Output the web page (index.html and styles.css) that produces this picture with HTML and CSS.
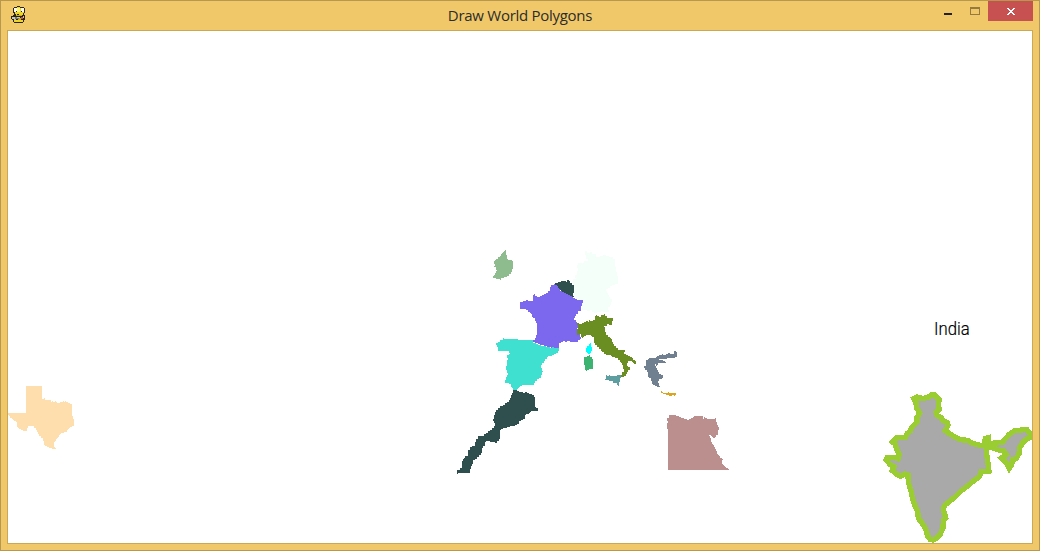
FILE: index.html
```html
<!DOCTYPE html>
<html lang="en">
<head>
<meta charset="utf-8">
<title>Draw World Polygons</title>
<link rel="stylesheet" href="styles.css">
</head>
<body>
<div class="window">
  <header class="titlebar">
    <svg class="app-icon" viewBox="30 18 48 54" shape-rendering="crispEdges">
      <path fill="#2b250c" d="M42 21h9v-3h9v3h12v3h3v15h-3v6h3v15h-3v6h-3v3H42v-3h-3v-6h-3v-3h-3V48h6v-3h3v-6h-3V24h3z"/>
      <path fill="#ecd62b" d="M45 24h6v-3h9v3h12v15h-3v6H48v-3h-3zM42 60h27v6H42z"/>
      <path fill="#fff568" d="M51 24h9v12h-9z"/>
      <path fill="#c9b01c" d="M48 45h18v3H48zM54 54h9v6h-9z"/>
      <path fill="#fafaf4" d="M42 24h9v12h-9zM63 24h9v12h-9z"/>
      <path fill="#222" d="M48 33h3v3h-3zM63 33h3v3h-3zM51 42h6v3h-6z"/>
      <path fill="#c4c4c0" d="M36 51h9v6h-9zM42 57h6v3h-6zM51 51h9v3h-9zM69 48h3v6h-3z"/>
      <path fill="#777" d="M45 51h6v6h-6zM51 54h6v3h-6z"/>
      <path fill="#d64555" d="M63 51h6v6h-6z"/>
    </svg>
    <h1 class="title">Draw World Polygons</h1>
    <div class="controls">
      <span class="minimize"></span>
      <span class="maximize"></span>
      <span class="close"><svg viewBox="0 0 8 7" width="8" height="7" shape-rendering="crispEdges"><path fill="#fff" d="M0 0h2v1h1v1h2v-1h1v-1h2v1h-1v1h-1v1h-1v1h1v1h1v1h1v1h-2v-1h-1v-1h-2v1h-1v1h-2v-1h1v-1h1v-1h1v-1h-1v-1h-1v-1h-1z"/></svg></span>
    </div>
  </header>
  <main class="canvas">
    <svg class="map" viewBox="8 31 1024 512" width="1024" height="512" shape-rendering="crispEdges">
      <!-- Texas -->
      <g transform="translate(0 380) scale(.33333)">
        <path fill="#ffdead" d="M78 18H126V57H132V54H135V60H153V66H156V63H159V66H165V63H168V66H171V69H180V66H189V63H192V66H195V63H198V66H204V69H210V72H216V108H219V117H222V138H216V141H210V144H207V147H204V150H201V156H192V159H183V162H180V165H177V171H174V174H171V177H168V183H165V186H162V201H165V204H168V207H156V204H147V201H141V198H135V195H132V183H129V174H123V168H117V162H114V156H111V150H108V144H102V138H84V144H81V153H69V150H63V147H57V144H54V141H51V126H48V123H42V120H39V117H36V114H30V108H27V105H24V99H78Z"/>
      </g>
      <!-- Germany, Belgium, France, Ireland -->
      <g transform="translate(485 245) scale(.33333)">
        <path fill="#8fbc8f" d="M60 15H63V30H66V42H69V45H81V48H84V72H81V81H78V87H72V93H66V96H57V99H48V104H45V101H33V99H24V93H27V90H30V84H33V78H36V75H33V66H27V63H30V57H27V48H30V45H33V42H39V36H45V33H48V27H51V24H54V21H57V18H60Z"/>
        <path fill="#f5fffa" d="M300 18H306V24H315V21H321V27H333V36H345V33H354V30H363V33H372V36H384V42H390V66H393V81H396V93H399V117H390V120H381V123H375V129H369V132H363V138H366V144H369V150H372V156H375V162H381V171H378V180H375V186H369V195H372V201H354V198H348V201H336V204H327V201H321V195H315V198H306V195H291V186H290V165H279V162H273V156H267V129H264V102H273V99H270V90H276V78H279V69H276V60H279V54H297V48H309V42H303V30H300Z"/>
        <path fill="#2f4f4f" d="M210 117V114H219V111H228V108H243V111H246V105H252V108H255V114H261V120H267V144H264V153H267V156H255V153H246V147L231 141L219 129Z"/>
        <path fill="#7b68ee" d="M201 120H207V117H210V120H216V123H219V129H222V132H225V138H231V141H237V144H243V147H249V150H255V153H261V156H264V159H270V162H276V165H294V174H291V183H288V198H279V207H273V213H270V219H267V225H273V231H276V240H279V249H276V261H282V267H285V276H288V282H285V285H279V291H255V288H246V291H240V288H234V291H228V294H222V309H207V306H201V309H198V306H186V303H177V300H165V297H159V294H150V291H144V285H150V279H153V270H156V234H153V228H150V219H144V216H141V207H138V204H135V201H129V195H123V192H105V171H114V168H123V165H129V168H144V150H147V147H150V153H156V156H165V153H171V150H177V147H183V144H189V138H195V126H198V120Z"/>
      </g>
      <!-- Spain -->
      <g transform="translate(490 330) scale(.33333)">
        <path fill="#40e0d0" d="M36 30H39V24H42V27H84V30H129V39H138V42H144V45H153V48H168V51H180V54H186V51H192V54H207V63H204V69H198V72H192V75H186V78H174V81H171V87H165V93H162V99H156V105H153V114H156V123H159V126H156V135H153V144H147V147H141V153H135V159H132V165H96V168H90V171H87V174H84V177H81V180H69V174H66V171H63V162H57V159H45V150H48V141H51V135H54V129H51V120H48V108H51V90H54V84H51V75H57V72H60V69H57V63H24V51H21V45H18V39H24V36H30V30Z"/>
      </g>
      <!-- Italy and its islands, Greece -->
      <g transform="translate(570 310) scale(.33333)">
        <path fill="#6b8e23" d="M21 39H27V42H36V39H42V36H48V33H54V36H57V30H60V33H69V30H75V18H78V15H81V18H87V21H93V15H102V12H105V18H111V24H129V33H126V45H117V42H111V48H102V51H105V66H108V75H114V81H120V84H123V87H126V96H129V102H132V108H138V114H144V120H165V126H162V132H168V135H174V138H180V141H186V144H189V150H195V153H198V162H192V159H189V156H186V153H174V159H171V168H174V171H180V180H174V186H171V192H168V198H162V201H153V195H156V186H162V177H159V165H156V159H153V156H150V150H144V144H135V141H126V138H123V135H108V132H102V126H96V123H93V117H87V111H81V105H75V99H72V81H66V78H63V75H48V78H42V81H39V84H36V81H33V72H27V75H21V57H24V45H21Z"/>
        <path fill="#0ff" d="M60 99H63V111H66V123H63V129H60V132H54V129H51V126H48V114H51V108H57V102H60Z"/>
        <path fill="#3cb371" d="M42 141H51V138H57V135H60V141H66V147H69V177H57V180H51V183H48V180H45V165H42Z"/>
        <path fill="#5f9ea0" d="M108 195H111V198H117V195H120V198H141V195H153V204H150V216H147V228H144V225H141V219H129V213H117V210H105V207H108Z"/>
        <path fill="#708090" d="M312 123H318V126H321V141H315V144H291V147H267V150H279V153H285V156H288V159H264V165H261V168H258V162H255V168H258V174H261V180H264V186H267V192H273V195H279V204H276V207H267V213H264V219H267V228H270V231H261V228H255V225H249V222H246V213H243V204H237V201H234V186H231V180H225V174H222V168H228V150H234V147H237V144H258V141H261V138H267V135H276V132H279V135H288V132H294V129H300V132H312Z"/>
        <path fill="#daa520" d="M273 243H276V246H279V249H294V246H297V249H318V255H315V258H312V255H306V258H297V255H288V252H279V249H273Z"/>
      </g>
      <!-- Morocco -->
      <g transform="translate(450 385) scale(.33333)">
        <path fill="#2f4f4f" d="M189 15H201V18H207V21H219V24H225V21H231V24H237V27H246V30H252V36H255V66H258V69H264V78H243V81H240V84H237V87H228V90H225V102H219V105H213V108H207V117H201V120H195V123H180V126H171V129H159V132H153V135H150V162H147V168H141V174H135V171H120V168H108V171H105V183H99V189H96V204H93V210H87V216H81V222H75V225H69V237H66V243H63V252H60V264H24V267H21V255H30V249H36V228H39V222H42V219H45V213H54V195H60V186H66V183H75V171H78V162H84V153H102V147H108V144H114V138H120V135H126V129H132V123H135V114H132V108H129V102H132V90H135V81H138V75H144V69H150V63H159V60H165V54H171V51H177V45H180V39H183V30H186V24H189Z"/>
      </g>
      <!-- Egypt -->
      <g transform="translate(660 405) scale(.33333)">
        <path fill="#bc8f8f" d="M27 30H48V33H57V36H63V39H72V42H81V45H87V42H93V39H99V36H102V33H129V42H132V36H135V39H141V42H165V39H168V51H171V60H174V66H177V75H174V90H168V96H165V99H159V96H156V93H153V90H147V93H150V99H153V111H156V117H159V120H162V126H165V132H168V138H171V147H174V150H177V153H180V159H186V162H189V165H186V177H189V180H192V183H195V186H198V189H204V192H207V195H24V72H21V54H24V48H21V39H27Z"/>
      </g>
      <!-- India -->
      <g transform="translate(880 385) scale(.33333)" fill="#a9a9a9" stroke="#9acd32" stroke-width="16" stroke-linejoin="miter" stroke-miterlimit="2">
        <path d="M101 41L111 36L118 39L130 40L145 37L153 30L164 29L170 37L178 45L175 58L178 73L168 82L172 92L184 98L188 106L201 112L204 120L200 130L196 137L208 146L225 156L240 164L262 166L276 174L296 180L312 183L316 160L325 158L323 183L319 200L321 215L324 235L327 258L304 260L297 276L278 290L262 304L244 317L224 337L209 349L195 360L190 372L197 398L190 405L189 430L180 449L169 460L160 465L151 464L142 452L137 432L125 412L115 400L113 380L102 355L98 340L92 315L85 292L84 270L74 267L62 274L51 268L37 257L42 245L31 239L18 225L22 217L43 218L54 221L58 208L50 194L46 178L38 171L52 157L75 158L81 146L91 138L96 126L112 110L110 98L119 84L110 69L108 55Z"/>
        <path d="M323 170L331 180L342 174L366 173L377 160L389 147L405 137L424 135L440 133L449 145L453 157L438 164L428 174L420 186L417 206L409 221L398 224L395 240L388 250L381 236L370 225L364 219L379 209L372 198L352 194L337 188Z"/>
      </g>
    </svg>
    <div class="country-label">India</div>
  </main>
</div>
</body>
</html>
```
FILE: styles.css
```css
* { box-sizing: border-box; }
body { margin: 0; background: #f0c869; }
.window {
  width: 1040px;
  height: 551px;
  border: 1px solid #b7984f;
  background: #f0c869;
  padding: 0 6px 6px;
  display: flex;
  flex-direction: column;
}
.titlebar {
  height: 29px;
  flex: none;
  display: grid;
  grid-template-columns: 120px 1fr 120px;
  align-items: start;
}
.app-icon { width: 16px; height: 18px; margin: 5px 0 0 3px; }
.title {
  margin: 4px 0 0;
  font: 400 15px/20px "Open Sans", "Noto Sans", sans-serif;
  letter-spacing: -0.28px;
  color: #2c2c2c;
  text-align: center;
}
.controls { display: flex; justify-content: flex-end; }
.minimize { width: 8px; height: 2px; margin: 12px 18px 0 0; background: #222; }
.maximize { width: 10px; height: 8px; margin: 6px 8px 0 0; border: 1px solid #96793f; border-top-width: 2px; }
.close {
  width: 45px;
  height: 20px;
  background: #c75050;
  display: flex;
  align-items: center;
  justify-content: center;
  padding-left: 1px;
  padding-top: 1px;
}
.canvas {
  position: relative;
  width: 1026px;
  height: 514px;
  border: 1px solid #c9a858;
  background: #fff;
  overflow: hidden;
}
.map { display: block; }
.country-label {
  position: absolute;
  left: 926px;
  top: 288px;
  font: 300 19px/20px Roboto, "Liberation Sans", sans-serif;
  transform: scaleX(.88);
  transform-origin: 0 0;
  -webkit-text-stroke: 0.2px #000;
  color: #000;
}
```
